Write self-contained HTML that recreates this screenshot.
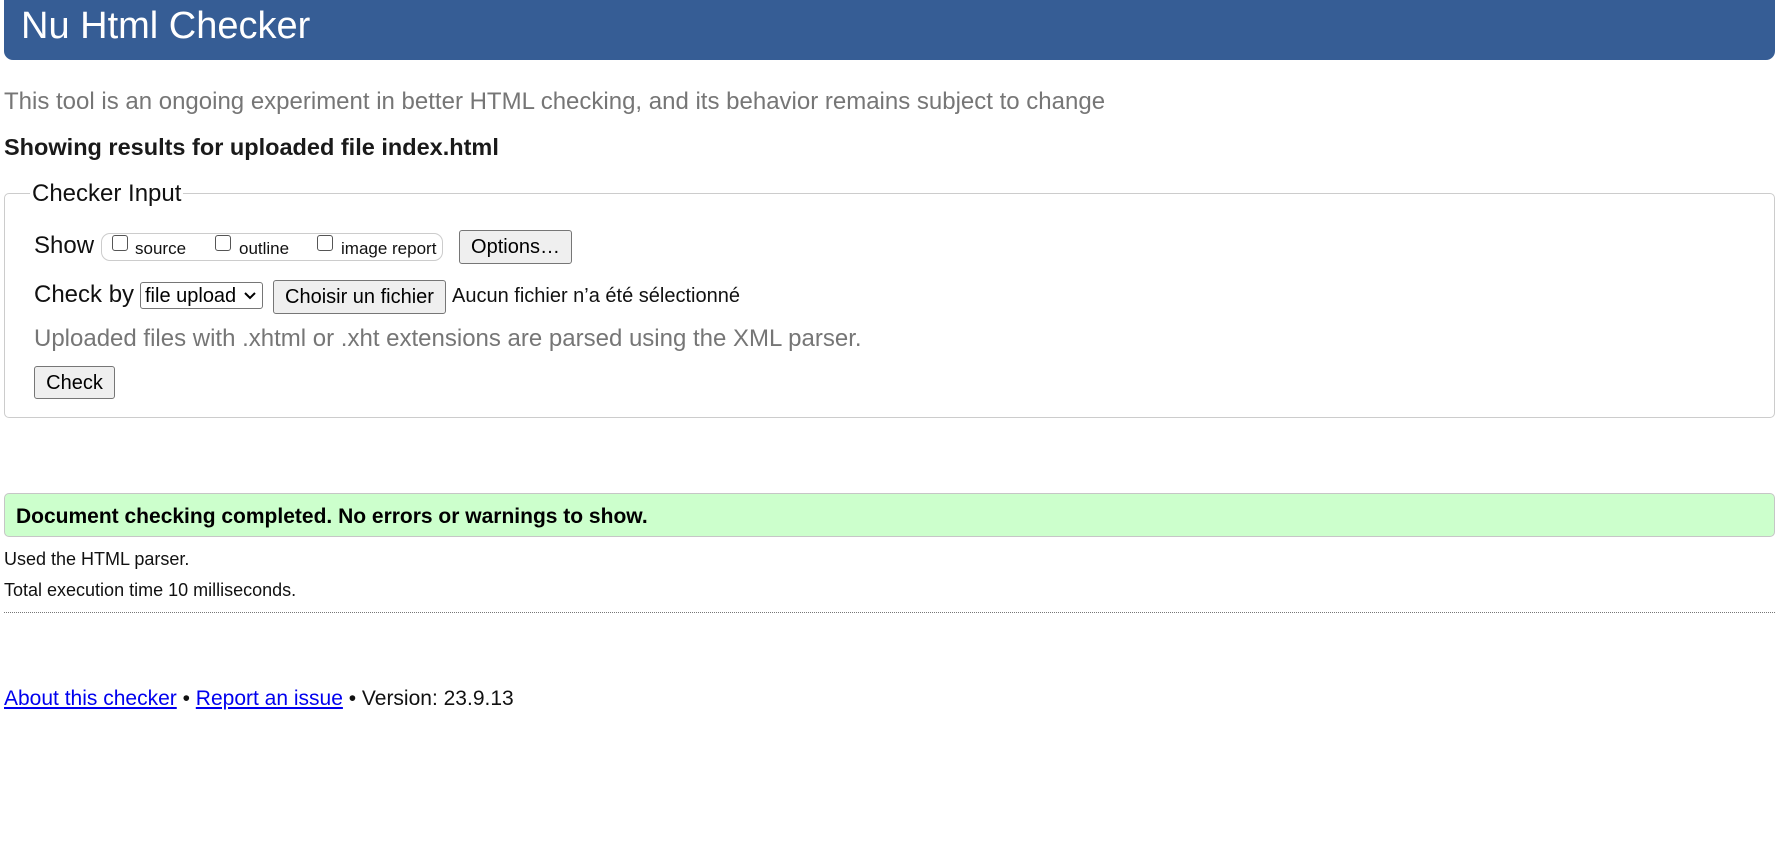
<!DOCTYPE html>
<html><head><meta charset="utf-8">
<style>
*{margin:0;padding:0;box-sizing:border-box}
html,body{width:1787px;height:843px;background:#fff;overflow:hidden}
body{font-family:"Liberation Sans",Arial,sans-serif;color:#222;position:relative}
.a{position:absolute;white-space:nowrap;line-height:1}
.hdr{position:absolute;left:4px;top:0;width:1771px;height:60px;background:#365d95;border-radius:0 0 9px 9px}
.btn{position:absolute;background:#efefef;border:1px solid #767676;border-radius:3px;font-size:20px;color:#000;display:flex;align-items:center;justify-content:center;line-height:1}
.cb{position:absolute;width:16px;height:16px;border:1px solid #555;border-radius:3px;background:#fff}
</style></head><body>
<div class="hdr"></div>
<div class="a" style="left:21px;top:7px;font-size:38px;color:#fff">Nu Html Checker</div>
<div class="a" style="left:4px;top:90px;font-size:24px;color:#767676">This tool is an ongoing experiment in better HTML checking, and its behavior remains subject to change</div>
<div class="a" style="left:4px;top:136px;font-size:23.5px;font-weight:bold;color:#1a1a1a">Showing results for uploaded file index.html</div>

<div style="position:absolute;left:4px;top:193px;width:1771px;height:225px;border:1px solid #ccc;border-radius:5px"></div>
<div class="a" style="left:30px;top:182px;font-size:24px;background:#fff;padding:0 2px;color:#111">Checker Input</div>

<div class="a" style="left:34px;top:234px;font-size:24px;color:#111">Show</div>
<div style="position:absolute;left:101px;top:233px;width:342px;height:28px;border:1px solid #ccc;border-radius:9px"></div>
<div class="cb" style="left:112px;top:235px"></div>
<div class="a" style="left:135px;top:240px;font-size:17px;color:#111">source</div>
<div class="cb" style="left:215px;top:235px"></div>
<div class="a" style="left:239px;top:240px;font-size:17px;color:#111">outline</div>
<div class="cb" style="left:317px;top:235px"></div>
<div class="a" style="left:341px;top:240px;font-size:17px;color:#111">image report</div>
<div class="btn" style="left:459px;top:230px;width:113px;height:34px">Options…</div>

<div class="a" style="left:34px;top:283px;font-size:24px;color:#111">Check by</div>
<div style="position:absolute;left:140px;top:282px;width:123px;height:27px;border:1px solid #767676;border-radius:3px;background:#fff"></div>
<div class="a" style="left:145px;top:286px;font-size:20px;color:#000">file upload</div>
<svg style="position:absolute;left:243px;top:291px" width="14" height="10" viewBox="0 0 14 10"><path d="M2 2 L7 7 L12 2" fill="none" stroke="#000" stroke-width="2"/></svg>
<div class="btn" style="left:273px;top:280px;width:173px;height:34px">Choisir un fichier</div>
<div class="a" style="left:452px;top:286px;font-size:20px;color:#111">Aucun fichier n’a été sélectionné</div>

<div class="a" style="left:34px;top:327px;font-size:24px;color:#767676">Uploaded files with .xhtml or .xht extensions are parsed using the XML parser.</div>
<div class="btn" style="left:34px;top:366px;width:81px;height:33px">Check</div>

<div style="position:absolute;left:4px;top:493px;width:1771px;height:44px;background:#ccffcc;border:1px solid #c6c6c6;border-radius:5px"></div>
<div class="a" style="left:16px;top:506px;font-size:21px;font-weight:bold;color:#000">Document checking completed. No errors or warnings to show.</div>

<div class="a" style="left:4px;top:550px;font-size:18px;color:#111">Used the HTML parser.</div>
<div class="a" style="left:4px;top:581px;font-size:18px;color:#111">Total execution time 10 milliseconds.</div>
<div style="position:absolute;left:4px;top:612px;width:1771px;border-top:1px dotted #777"></div>

<div class="a" style="left:4px;top:688px;font-size:21px;color:#111"><span style="color:#0000ee;text-decoration:underline">About this checker</span> • <span style="color:#0000ee;text-decoration:underline">Report an issue</span> • Version: 23.9.13</div>
</body></html>
